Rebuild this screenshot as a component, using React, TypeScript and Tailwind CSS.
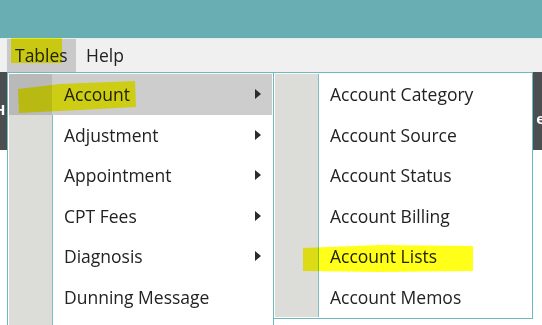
import React from "react";

const font = { fontFamily: '"Open Sans", "Noto Sans", sans-serif' };

const mainItems = [
  { label: "Account", sub: true, active: true },
  { label: "Adjustment", sub: true },
  { label: "Appointment", sub: true },
  { label: "CPT Fees", sub: true },
  { label: "Diagnosis", sub: true },
  { label: "Dunning Message", sub: false },
];

const subItems = [
  "Account Category",
  "Account Source",
  "Account Status",
  "Account Billing",
  "Account Lists",
  "Account Memos",
];

function Arrow() {
  return (
    <svg width="6" height="10" viewBox="0 0 6 10" className="mr-[11px]">
      <path d="M0 0 L6 5 L0 10 Z" fill="#2b2b2b" />
    </svg>
  );
}

function MenuRow({ label, sub, active }: { label: string; sub?: boolean; active?: boolean }) {
  return (
    <div className={`flex h-[40.5px] items-center ${active ? "bg-[#cdcdcd]" : ""}`}>
      <div className={`h-full w-[43px] ${active ? "bg-[#b9b9b9]" : ""}`} />
      <div className="flex-1 pl-[12px] text-[17.5px] text-[#222]">{label}</div>
      {sub && <Arrow />}
    </div>
  );
}

export default function App() {
  return (
    <div className="relative h-[325px] w-[542px] overflow-hidden bg-white" style={font}>
      <div className="h-[38px] bg-[#69aeb3]" />
      <div className="h-px bg-[#dfeeee]" />
      <div className="flex h-[33px] items-center bg-[#f0f0f0] pl-[7px] text-[17.5px] text-[#222]">
        <div className="flex h-full w-[69px] items-center bg-[#c9c9c9] pl-[8px]">Tables</div>
        <div className="pl-[10px]">Help</div>
      </div>
      <div className="flex h-[78px] justify-between bg-[#4c4f51] text-[15px] font-bold text-white">
        <span className="-ml-[6px] pt-[26px]">H</span>
        <span className="-mr-[3px] pt-[35px]">e</span>
      </div>

      {/* Tables dropdown */}
      <div className="absolute left-[7px] top-[72px] h-[260px] w-[267px] border border-[#6fb8bd] bg-white p-[1px]">
        <div className="relative">
          <div className="absolute bottom-[-20px] left-0 top-0 w-[43px] bg-[#dcdcd8]" />
          <div className="absolute bottom-[-20px] left-[43px] top-0 w-px bg-[#7dbfc3]" />
          <div className="relative">
            {mainItems.map((it) => (
              <MenuRow key={it.label} {...it} />
            ))}
          </div>
        </div>
      </div>

      {/* Account submenu */}
      <div className="absolute left-[273px] top-[72px] w-[260px] border border-[#6fb8bd] bg-white p-[1px]">
        <div className="relative">
          <div className="absolute bottom-0 left-0 top-0 w-[43px] bg-[#dcdcd8]" />
          <div className="absolute bottom-0 left-[43px] top-0 w-px bg-[#7dbfc3]" />
          <div className="relative">
            {subItems.map((s) => (
              <div key={s} className="flex h-[40.5px] items-center pl-[55px] text-[17.5px] text-[#222]">
                {s}
              </div>
            ))}
          </div>
        </div>
      </div>

      {/* highlighter marks */}
      <svg
        className="pointer-events-none absolute left-0 top-0 mix-blend-multiply"
        width="542"
        height="325"
      >
        <polygon points="11,38 62,38 62,63 11,63" fill="#ffff00" opacity="0.9" />
        <polygon points="18,89 60,84 135,81 136,107 80,110 19,113" fill="#ffff00" opacity="0.9" />
        <polygon points="303,248 380,245 473,246 473,271 380,272 303,271" fill="#ffff00" opacity="0.9" />
      </svg>
    </div>
  );
}
